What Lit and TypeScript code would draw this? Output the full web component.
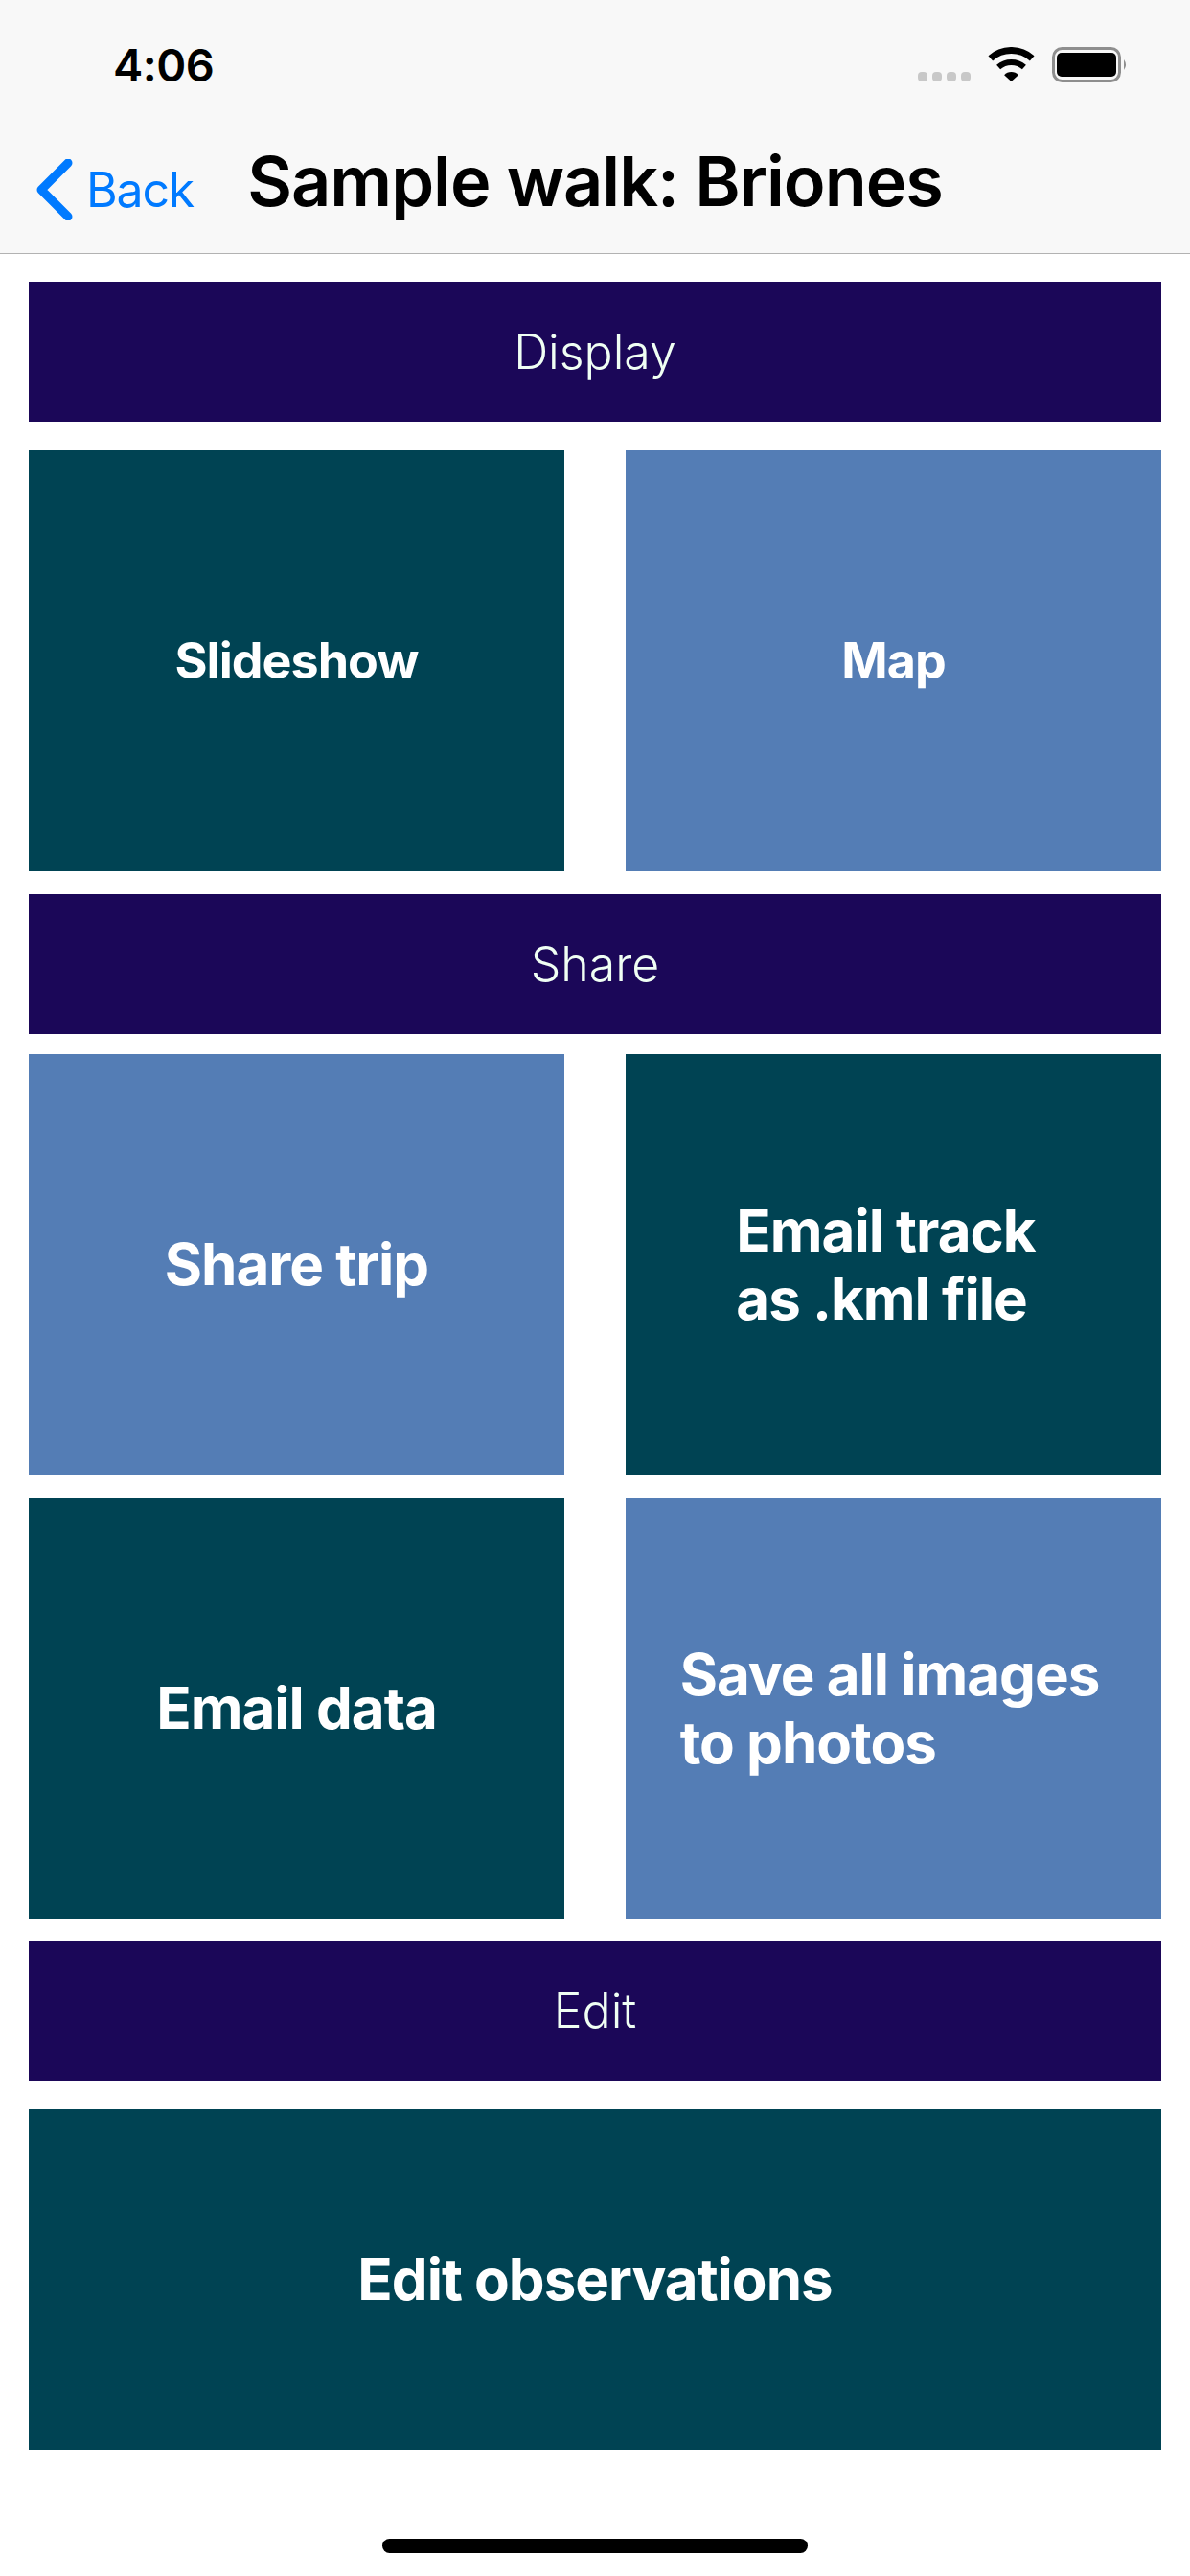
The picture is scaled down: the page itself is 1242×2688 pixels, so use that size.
import { LitElement, html, css } from "lit";
import { customElement } from "lit/decorators.js";

@customElement("app-root")
export class AppRoot extends LitElement {
  static styles = css`
    :host { display: block; width: 1242px; height: 2688px; background: #fff; position: relative; overflow: hidden; font-family: Inter, "Liberation Sans", sans-serif; }
    .top { height: 264px; background: #f8f8f8; border-bottom: 1px solid #b2b2b2; display: flex; flex-direction: column; }
    .status { height: 132px; display: flex; align-items: center; justify-content: space-between; padding: 3px 64px 0 118px; box-sizing: border-box; }
    .time { font-size: 47px; line-height: 56px; font-weight: 600; letter-spacing: -0.5px; color: #000; }
    .status svg { display: block; }
    .nav { height: 132px; position: relative; }
    .back { position: absolute; left: 38px; top: 34px; display: flex; align-items: center; color: #007aff; font-size: 50px; letter-spacing: -1.2px; gap: 14px; }
    .back svg { display: block; }
    .title { text-align: center; font-size: 72px; letter-spacing: -1px; font-weight: 600; color: #000; line-height: 82px; padding-top: 16px; }
    .content { padding: 29px 30px 0; display: flex; flex-direction: column; }
    .head { height: 146px; background: #1b0758; color: #f0fff4; display: flex; align-items: center; justify-content: center; font-size: 50px; font-weight: 300; }
    .row { display: flex; justify-content: space-between; height: 439px; }
    .tile { width: 559px; display: flex; align-items: center; justify-content: center; color: #fff; font-weight: 700; font-size: 52px; letter-spacing: -1px; line-height: 71px; }
    .tile.lg { font-size: 60px; letter-spacing: -1px; }
    .dark { background: #004353; }
    .blue { background: #547db5; }
    .full { width: 100%; height: 355px; }
    .m30 { margin-top: 30px; }
    .m24 { margin-top: 24px; }
    .m23 { margin-top: 23px; }
    .m21 { margin-top: 21px; }
    .home { position: absolute; left: 399px; top: 2649px; width: 444px; height: 15px; border-radius: 8px; background: #000; }
    .email { padding-right: 16px; }
    .save { padding-right: 8px; }
  `;
  render() {
    return html`
      <div class="top">
        <div class="status">
          <span class="time">4:06</span>
          <svg width="220" height="37" viewBox="0 0 220 37">
            <g fill="#c8c8c8">
              <rect x="0" y="26" width="10" height="10" rx="4" />
              <rect x="15" y="26" width="10" height="10" rx="4" />
              <rect x="30" y="26" width="10" height="10" rx="4" />
              <rect x="45" y="26" width="10" height="10" rx="4" />
            </g>
            <path d="M75.8 11.8 A32.5 32.5 0 0 1 119.2 11.8" fill="none" stroke="#000" stroke-width="7" />
            <path d="M84.1 21.1 A20 20 0 0 1 110.9 21.1" fill="none" stroke="#000" stroke-width="6" />
            <path d="M97.5 36 L90.1 29.3 A10 10 0 0 1 104.9 29.3 Z" fill="#000" />
            <rect x="141.5" y="1.5" width="69" height="34" rx="9" fill="none" stroke="#8e8e8e" stroke-width="3" />
            <rect x="145" y="6" width="62" height="25" rx="5" fill="#000" />
            <path d="M215 13 Q219 18.5 215 24 Z" fill="#8e8e8e" />
          </svg>
        </div>
        <div class="nav">
          <div class="back">
            <svg width="38" height="64" viewBox="0 0 38 64"><path d="M33 4 L5 32 L33 60" fill="none" stroke="#007aff" stroke-width="9" stroke-linecap="round" stroke-linejoin="round" /></svg>
            <span>Back</span>
          </div>
          <div class="title">Sample walk: Briones</div>
        </div>
      </div>
      <div class="content">
        <div class="head">Display</div>
        <div class="row m30">
          <div class="tile dark">Slideshow</div>
          <div class="tile blue">Map</div>
        </div>
        <div class="head m24">Share</div>
        <div class="row m21">
          <div class="tile blue lg">Share trip</div>
          <div class="tile dark lg"><span class="email">Email track<br />as .kml file</span></div>
        </div>
        <div class="row m24">
          <div class="tile dark lg">Email data</div>
          <div class="tile blue lg"><span class="save">Save all images<br />to photos</span></div>
        </div>
        <div class="head m23">Edit</div>
        <div class="tile lg dark full m30">Edit observations</div>
      </div>
      <div class="home"></div>
    `;
  }
}
